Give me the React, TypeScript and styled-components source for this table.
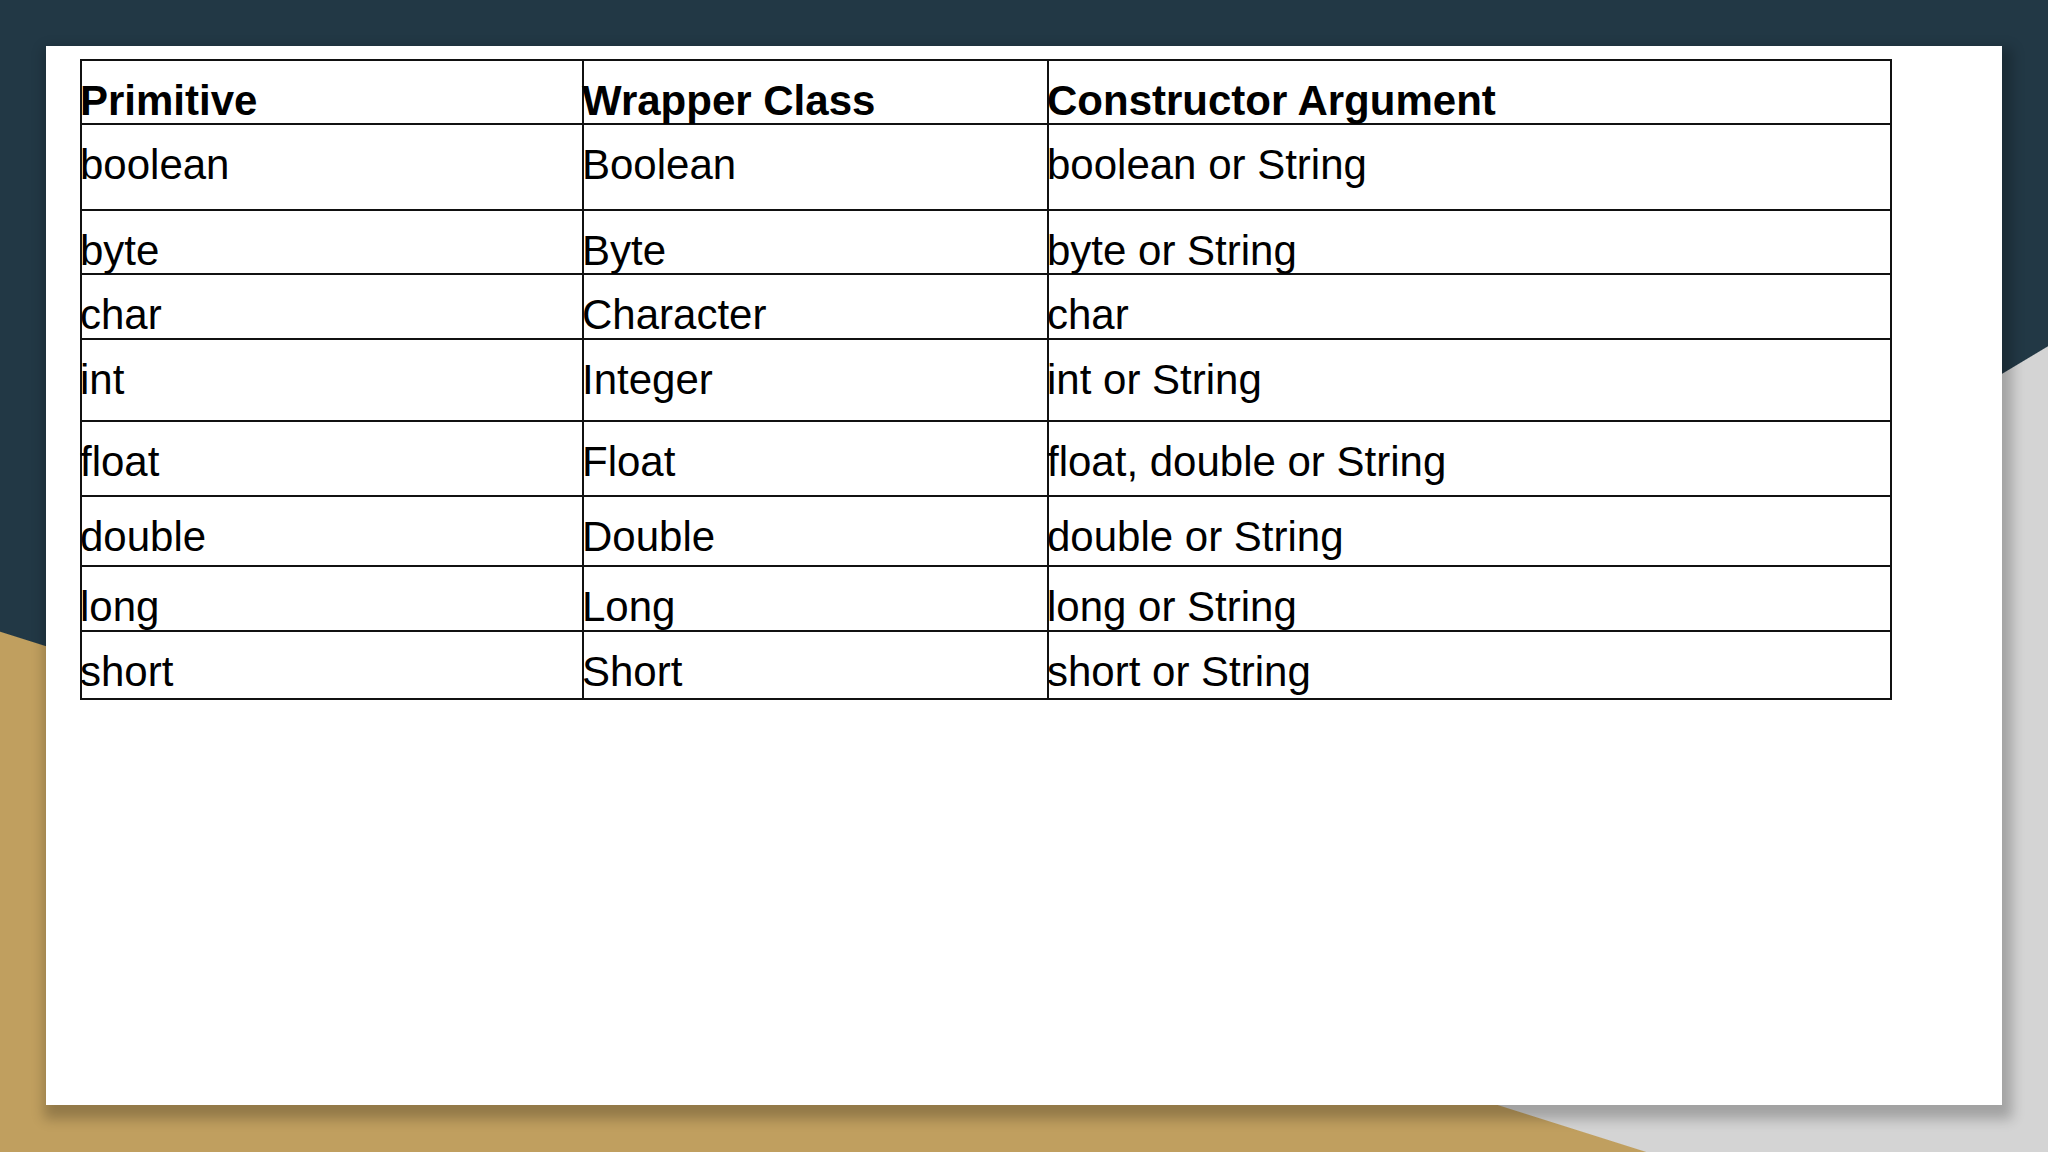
import styled, { createGlobalStyle } from "styled-components";

const rows = [
  { primitive: "boolean", wrapper: "Boolean", arg: "boolean or String", height: 86 },
  { primitive: "byte", wrapper: "Byte", arg: "byte or String", height: 64 },
  { primitive: "char", wrapper: "Character", arg: "char", height: 65 },
  { primitive: "int", wrapper: "Integer", arg: "int or String", height: 82 },
  { primitive: "float", wrapper: "Float", arg: "float, double or String", height: 75 },
  { primitive: "double", wrapper: "Double", arg: "double or String", height: 70 },
  { primitive: "long", wrapper: "Long", arg: "long or String", height: 65 },
  { primitive: "short", wrapper: "Short", arg: "short or String", height: 68 },
];

const GlobalStyle = createGlobalStyle`
  html, body {
    margin: 0;
    padding: 0;
    overflow: hidden;
  }
  body {
    font-family: "Liberation Sans", Arial, sans-serif;
  }
`;

export default function App() {
  return (
    <>
      <GlobalStyle />
      <StyledPage>
        <StyledSlide>
          <StyledTable>
            <colgroup>
              <col style={{ width: 502 }} />
              <col style={{ width: 465 }} />
              <col style={{ width: 843 }} />
            </colgroup>
            <thead>
              <StyledRow height={64}>
                <StyledHead>Primitive</StyledHead>
                <StyledHead>Wrapper Class</StyledHead>
                <StyledHead>Constructor Argument</StyledHead>
              </StyledRow>
            </thead>
            <tbody>
              {rows.map((row) => (
                <StyledRow key={row.primitive} height={row.height}>
                  <StyledCell>{row.primitive}</StyledCell>
                  <StyledCell>{row.wrapper}</StyledCell>
                  <StyledCell>{row.arg}</StyledCell>
                </StyledRow>
              ))}
            </tbody>
          </StyledTable>
        </StyledSlide>
      </StyledPage>
    </>
  );
}

const StyledPage = styled.div`
  width: 2048px;
  height: 1152px;
  box-sizing: border-box;
  padding: 46px 0 0 46px;
  background-color: #223845;
  background-image:
    linear-gradient(197.54deg, transparent 1219px, #c09f5f 1220px),
    linear-gradient(149.04deg, transparent 1350px, #d4d4d4 1351px);
`;

const StyledSlide = styled.div`
  width: 1956px;
  height: 1059px;
  box-sizing: border-box;
  padding: 13px 0 0 34px;
  background: #ffffff;
  box-shadow: 4px 8px 12px 6px rgba(0, 0, 0, 0.24);
`;

const StyledTable = styled.table`
  width: 1810px;
  table-layout: fixed;
  border-collapse: collapse;
  color: #000;
  font-size: 42px;
  line-height: 45px;
`;

const StyledRow = styled.tr<{ height: number }>`
  height: ${(props) => props.height}px;
`;

const StyledCell = styled.td`
  border: 2px solid #111;
  padding: 17px 0 0 0;
  text-indent: -2px;
  vertical-align: top;
  white-space: nowrap;
  font-weight: 400;
`;

const StyledHead = styled(StyledCell).attrs({ as: "th" })`
  text-align: left;
  font-weight: 700;
`;
